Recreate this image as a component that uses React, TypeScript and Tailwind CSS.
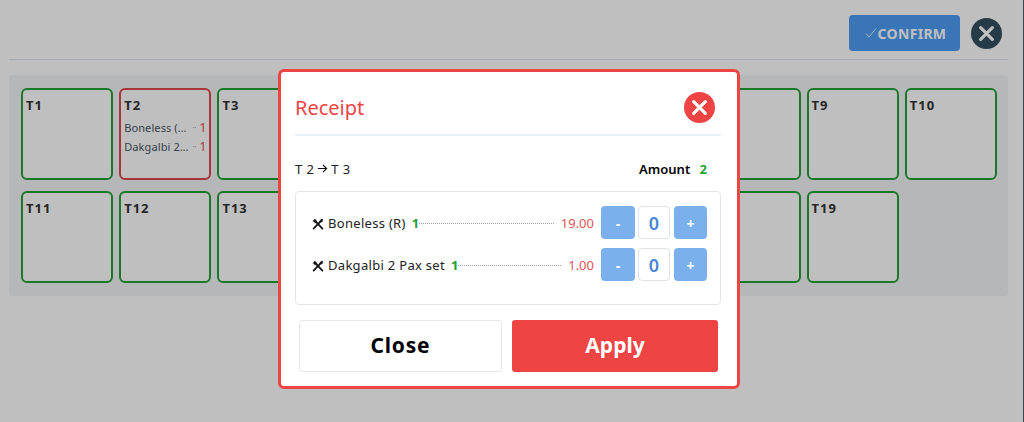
import React from "react";

const row1 = ["T1", "T2", "T3", "T4", "T5", "T6", "T7", "T8", "T9", "T10"];
const row2 = ["T11", "T12", "T13", "T14", "T15", "T16", "T17", "T18", "T19"];

function Utensils() {
  return (
    <svg viewBox="0 0 12 12" className="w-[12px] h-[12px] shrink-0" fill="#111" stroke="#111" strokeLinecap="round">
      <path d="M1.6 10.6 L8 3.8" strokeWidth="1.7" />
      <path d="M10.4 10.6 L4 3.8" strokeWidth="1.7" />
      <ellipse cx="9.3" cy="2.7" rx="1.1" ry="1.9" transform="rotate(43 9.3 2.7)" strokeWidth="0.4" />
      <path d="M1 3 L3 1 L5 3.4 L3.4 5 Z" strokeWidth="0.4" />
    </svg>
  );
}

function X({ size, width = 3 }: { size: number; width?: number }) {
  return (
    <svg viewBox="0 0 16 16" width={size} height={size} fill="none" stroke="white" strokeWidth={width} strokeLinecap="round">
      <path d="M2.5 2.5 L13.5 13.5 M13.5 2.5 L2.5 13.5" />
    </svg>
  );
}

function Card({ name, red, children }: { name: string; red?: boolean; children?: React.ReactNode }) {
  return (
    <div className={"h-[92px] rounded-[6px] border-2 bg-white px-[3px] pt-[7px] " + (red ? "border-[#e0474c]" : "border-[#22a033]")}>
      <div className="text-[13px] leading-[16px] font-bold text-[#333] tracking-[1px]">{name}</div>
      {children}
    </div>
  );
}

function Line({ name, qty }: { name: string; qty: string }) {
  return (
    <div className="flex items-center h-[18.5px] text-[11px] text-[#4b5563]">
      <span className="whitespace-nowrap tracking-[0.1px]">{name}</span>
      <span className="ml-auto text-[#9ca3af] text-[8px] mr-[3px]">··</span>
      <span className="text-[#e0474c] text-[12px]">{qty}</span>
    </div>
  );
}

function Item({ name, price, qty }: { name: string; price: string; qty: string }) {
  return (
    <div className="flex items-center h-[33px]">
      <div className="flex-1 flex items-center pt-[2px]">
        <Utensils />
        <span className="ml-[4px] text-[13px] text-[#222] tracking-[0.3px]">{name}</span>
        <span className="ml-[6px] text-[13px] font-bold text-[#22a033]">{qty}</span>
        <span className="flex-1 border-t border-dotted border-[#9ca3af] mr-[7px]" />
        <span className="text-[13px] text-[#e25555] mr-[7px]">{price}</span>
      </div>
      <button className="w-[34px] h-full rounded-[4px] bg-[#7cb0ec] text-white text-[14px] font-bold pt-[2px]">-</button>
      <span className="w-[32px] h-full ml-[3px] mr-[4px] rounded-[4px] border border-[#dfe3e8] flex items-center justify-center text-[18px] font-semibold text-[#4a86d8] pt-[2px]">0</span>
      <button className="w-[33px] h-full rounded-[4px] bg-[#7cb0ec] text-white text-[14px] font-bold pt-[2px]">+</button>
    </div>
  );
}

export default function App() {
  return (
    <div className="relative h-[422px] w-[1024px] overflow-hidden bg-white font-['Noto_Sans','Open_Sans',sans-serif]">
      <div className="pl-[9px] pr-[16px] pt-[15px]">
        <div className="flex items-center justify-end h-[36px] pr-[6px]">
          <button className="h-[36px] w-[111px] rounded-[4px] bg-[#4d9cf5] text-white text-[14px] font-bold flex items-center justify-center gap-[1px] tracking-[0.3px] pl-[2px]">
            <svg viewBox="0 0 12 12" className="w-[12px] h-[12px]" fill="none" stroke="white" strokeWidth="0.8"><path d="M1 6.5 L4 10 L11 1.5" /></svg>
            CONFIRM
          </button>
          <span className="ml-[11px] w-[31px] h-[31px] rounded-full bg-[#324f5f] flex items-center justify-center"><X size={17} /></span>
        </div>
        <div className="mt-[8px] border-t border-[#d8e6f8]" />
        <div className="mt-[15px] h-[221px] rounded-[3px] bg-[#f3f4f6] pl-[12px] pr-[11px] pt-[13px]">
          <div className="grid grid-cols-10 gap-x-[6px] gap-y-[11px]">
            {row1.map((n) => n === "T2" ? (
              <Card key={n} name={n} red>
                <div className="mt-[6px]">
                  <Line name="Boneless (…" qty="1" />
                  <Line name="Dakgalbi 2…" qty="1" />
                </div>
              </Card>
            ) : <Card key={n} name={n} />)}
            {row2.map((n) => <Card key={n} name={n} />)}
          </div>
        </div>
      </div>

      <div className="absolute inset-0 bg-black/25" />
      <div className="absolute right-0 top-0 bottom-0 w-[1px] bg-[#3a4650]" />

      <div className="absolute left-[278px] top-[69px] w-[462px] h-[320px] rounded-[6px] border-[3px] border-[#ef4444] bg-white pl-[14px] pr-[16px]">
        <div className="flex items-center justify-between h-[64px] border-b-2 border-[#e8eff6] pt-[9px] pr-[6px]">
          <span className="text-[20px] text-[#ef4444]">Receipt</span>
          <span className="w-[31px] h-[31px] rounded-full bg-[#ef4444] flex items-center justify-center"><X size={17} /></span>
        </div>
        <div className="flex items-center justify-between h-[55px] pt-[12px]">
          <span className="flex items-center text-[13px] text-[#222] tracking-[0.4px]">
            T 2
            <svg viewBox="0 0 12 12" className="w-[11px] h-[11px] mx-[3px] -translate-y-[1px]" fill="none" stroke="#111" strokeWidth="1.3"><path d="M1 6 H10.5 M6.5 2 L10.5 6 L6.5 10" /></svg>
            T 3
          </span>
          <span className="text-[13px] font-semibold text-black pr-[14px]">
            Amount <span className="ml-[6px] font-bold text-[#22a033]">2</span>
          </span>
        </div>
        <div className="h-[114px] rounded-[4px] border border-[#e2e6ea] pl-[16px] pr-[13px] pt-[14px] flex flex-col gap-[9px]">
          <Item name="Boneless (R)" qty="1" price="19.00" />
          <Item name="Dakgalbi 2 Pax set" qty="1" price="1.00" />
        </div>
        <div className="mt-[15px] flex pl-[4px] gap-[10px]">
          <button className="w-[203px] h-[52px] rounded-[3px] border border-[#e5e7eb] text-[21px] font-bold text-black tracking-[0.8px]">Close</button>
          <button className="w-[206px] h-[52px] rounded-[3px] bg-[#ef4444] text-[21px] font-bold text-white">Apply</button>
        </div>
      </div>
    </div>
  );
}
